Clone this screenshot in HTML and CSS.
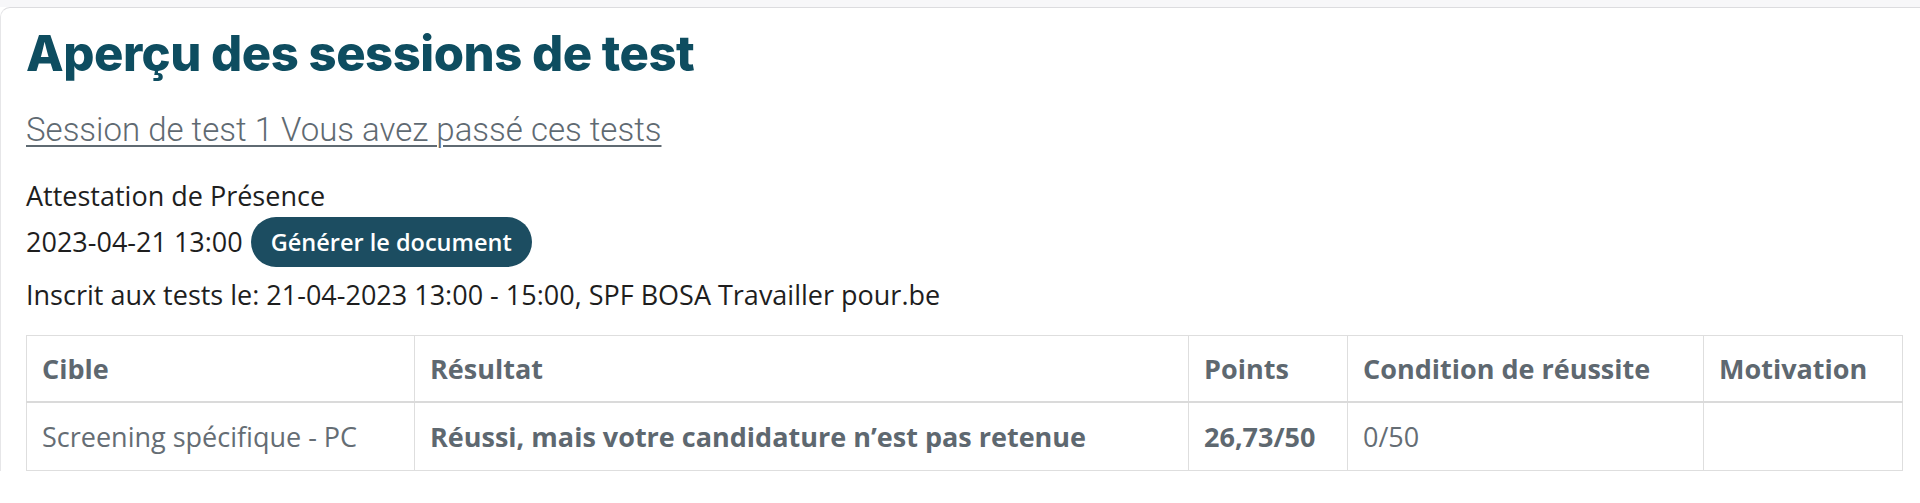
FILE: index.html
```html
<!DOCTYPE html>
<html lang="fr">
<head>
<meta charset="utf-8">
<title>Aperçu des sessions de test</title>
<link rel="stylesheet" href="styles.css">
</head>
<body>
<div class="topstrip"></div>
<main class="card">
  <h1 class="title">Aperçu des sessions de test</h1>
  <a class="session-link" href="#">Session de test 1 Vous avez passé ces tests</a>
  <div class="info">
    <p class="line">Attestation de Présence</p>
    <div class="line date-row"><span>2023-04-21 13:00</span><button class="btn" type="button">Générer le document</button></div>
    <p class="line inscrit">Inscrit aux tests le: 21-04-2023 13:00 - 15:00, SPF BOSA Travailler pour.be</p>
  </div>
  <table class="results">
    <thead>
      <tr>
        <th class="c-cible">Cible</th>
        <th class="c-res">Résultat</th>
        <th class="c-pts">Points</th>
        <th class="c-cond">Condition de réussite</th>
        <th class="c-mot">Motivation</th>
      </tr>
    </thead>
    <tbody>
      <tr>
        <td>Screening spécifique - PC</td>
        <td class="strong">Réussi, mais votre candidature n’est pas retenue</td>
        <td class="strong">26,73/50</td>
        <td>0/50</td>
        <td></td>
      </tr>
    </tbody>
  </table>
</main>
</body>
</html>
```
FILE: styles.css
```css
html, body {
  margin: 0;
  padding: 0;
  background: #ffffff;
  font-family: "Open Sans", "Noto Sans", sans-serif;
}
.topstrip {
  height: 7px;
  background: #f7f7f9;
}
.card {
  border-top: 1px solid #dcdcdf;
  border-left: 1px solid #e6e6e8;
  border-top-left-radius: 10px;
  padding: 0 17px 0 25px;
}
.title {
  margin: 0;
  padding-top: 16px;
  font-family: "Inter", sans-serif;
  font-weight: 800;
  font-size: 49px;
  line-height: 60px;
  letter-spacing: -0.5px;
  color: #0e4d60;
}
.session-link {
  display: inline-block;
  margin-top: 26px;
  font-family: "Roboto", sans-serif;
  font-weight: 300;
  font-size: 33px;
  line-height: 40px;
  color: #5f6a72;
  text-decoration: underline;
  text-decoration-thickness: 2px;
  text-underline-offset: 4px;
}
.info {
  margin-top: 28px;
  color: #1e1e1e;
  font-size: 27px;
}
.line {
  margin: 0;
  line-height: 36px;
}
.date-row {
  display: flex;
  align-items: center;
  gap: 8px;
  height: 56px;
}
.inscrit {
  margin-top: 7px;
}
.btn {
  font-family: "Open Sans", sans-serif;
  font-weight: 600;
  font-size: 23.5px;
  color: #ffffff;
  background: #1c4d61;
  border: none;
  border-radius: 25px;
  height: 50px;
  padding: 0 20px;
}
.results {
  margin-top: 22px;
  width: 100%;
  border-collapse: collapse;
  font-size: 27px;
  color: #5e6870;
}
.results th, .results td {
  border: 1px solid #dedede;
  text-align: left;
  padding: 0 15px;
}
.results th {
  height: 65px;
  font-weight: 700;
  border-bottom: 2px solid #dadada;
}
.results td {
  height: 67px;
  color: #656d74;
}
.results td.strong {
  font-weight: 700;
  color: #5e6870;
}
.c-cible { width: 357px; }
.c-res { width: 743px; }
.c-pts { width: 128px; }
.c-cond { width: 325px; }
```
